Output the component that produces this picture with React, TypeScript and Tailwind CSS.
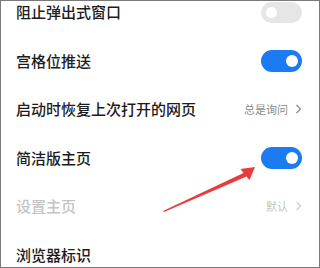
import React from "react";

const Toggle = ({ on }: { on: boolean }) =>
  on ? (
    <div className="relative w-[41px] h-[22px] rounded-full bg-[#1a7bf2] shrink-0">
      <div className="absolute right-[4px] top-[5px] w-[12px] h-[12px] rounded-full bg-white" />
    </div>
  ) : (
    <div className="relative w-[41px] h-[21px] rounded-full bg-[#e6e6e6] shrink-0">
      <div className="absolute left-[5px] top-[5px] w-[11px] h-[11px] rounded-full bg-white" />
    </div>
  );

const Chevron = ({ color }: { color: string }) => (
  <svg width="7" height="10" viewBox="0 0 7 10" className="shrink-0">
    <path d="M1.5 1 L5.5 5 L1.5 9" fill="none" stroke={color} strokeWidth="1.3" />
  </svg>
);

export default function App() {
  const font = { fontFamily: '"Noto Sans CJK SC", "Noto Sans", sans-serif' };
  return (
    <div
      className="relative w-[320px] h-[268px] bg-white border border-[#7a7a7a] overflow-hidden"
      style={font}
    >
      <div className="flex flex-col -mt-[13px]">
        <div className="flex items-center justify-between h-[48.5px] pl-[15px] pr-[17px]">
          <span className="text-[15px] font-medium text-[#1c1c1c]">阻止弹出式窗口</span>
          <Toggle on={false} />
        </div>
        <div className="flex items-center justify-between h-[48.5px] pl-[15px] pr-[17px]">
          <span className="text-[15px] font-medium text-[#1c1c1c]">宫格位推送</span>
          <Toggle on />
        </div>
        <div className="flex items-center justify-between h-[48.5px] pl-[15px] pr-[17px]">
          <span className="text-[15px] font-medium text-[#1c1c1c]">启动时恢复上次打开的网页</span>
          <div className="flex items-center gap-[7px]">
            <span className="text-[11px] text-[#8c8c8c]">总是询问</span>
            <Chevron color="#8c8c8c" />
          </div>
        </div>
        <div className="flex items-center justify-between h-[48.5px] pl-[15px] pr-[17px]">
          <span className="text-[15px] font-medium text-[#1c1c1c]">简洁版主页</span>
          <Toggle on />
        </div>
        <div className="flex items-center justify-between h-[48.5px] pl-[15px] pr-[17px]">
          <span className="text-[15px] font-medium text-[#c4c4c4]">设置主页</span>
          <div className="flex items-center gap-[7px]">
            <span className="text-[11px] text-[#c4c4c4]">默认</span>
            <Chevron color="#d0d0d0" />
          </div>
        </div>
        <div className="flex items-center justify-between h-[48.5px] pl-[15px] pr-[17px]">
          <span className="text-[15px] font-medium text-[#1c1c1c]">浏览器标识</span>
        </div>
      </div>
      <svg
        className="absolute left-0 top-0 pointer-events-none"
        width="320"
        height="268"
        viewBox="0 0 320 268"
      >
        <polygon
          points="162,210 242.5,172 239.5,168 254,166 248.5,179 245.5,175.5 163,211"
          fill="#ea3a3a"
        />
      </svg>
    </div>
  );
}
